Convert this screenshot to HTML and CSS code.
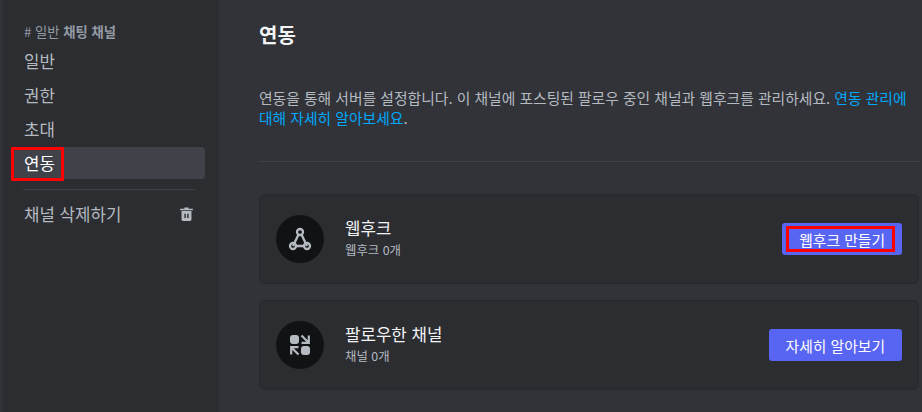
FILE: index.html
```html
<!DOCTYPE html>
<html lang="ko">
<head>
    <meta charset="UTF-8">
    <meta name="viewport" content="width=device-width, initial-scale=1.0">
    <title>연동</title>
    <link rel="stylesheet" href="styles.css">
</head>
<body>
    <div class="layout">
        <nav class="sidebar">
            <div class="side-header"><span class="hash"># 일반</span> <strong>채팅 채널</strong></div>
            <div class="side-item">일반</div>
            <div class="side-item">권한</div>
            <div class="side-item">초대</div>
            <div class="side-item active">연동<span class="mark mark-nav"></span></div>
            <div class="side-sep"></div>
            <div class="side-item delete">
                <span>채널 삭제하기</span>
                <svg class="trash" viewBox="0 0 24 24" width="17" height="17"><path fill="currentColor" d="M15 4V2H9v2H3v2h18V4h-6Z"/><path fill="currentColor" fill-rule="evenodd" d="M5 7v12c0 1.1.9 2 2 2h10c1.1 0 2-.9 2-2V7H5Zm6 10H9v-6h2v6Zm4 0h-2v-6h2v6Z"/></svg>
            </div>
        </nav>

        <main class="content">
            <h1>연동</h1>
            <p class="desc">연동을 통해 서버를 설정합니다. 이 채널에 포스팅된 팔로우 중인 채널과 웹후크를 관리하세요. <a href="#">연동 관리에 대해 자세히 알아보세요</a>.</p>
            <div class="content-sep"></div>

            <section class="card">
                <div class="card-icon">
                    <svg viewBox="0 0 24 24" width="24" height="24" fill="none" stroke="currentColor" stroke-width="2.300"><circle cx="12" cy="5" r="3"/><circle cx="5" cy="19" r="3"/><circle cx="19" cy="19" r="3"/><path d="M10.500 7.500 5 19M13.500 7.500 19 19M8 19h8"/></svg>
                </div>
                <div class="card-text">
                    <div class="card-title">웹후크</div>
                    <div class="card-sub">웹후크 0개</div>
                </div>
                <button class="btn">웹후크 만들기<span class="mark mark-btn"></span></button>
            </section>

            <section class="card">
                <div class="card-icon">
                    <svg viewBox="0 0 24 24" width="24" height="24"><rect x="2" y="2" width="9" height="9" rx="3" fill="currentColor"/><rect x="13" y="13" width="9" height="9" rx="3" fill="currentColor"/><path d="M13.500 2.500 20 9M13.500 9.800h7.300V2.500M10.500 21.500 4 15M10.500 14.200H3.200v7.300" fill="none" stroke="currentColor" stroke-width="2.200"/></svg>
                </div>
                <div class="card-text">
                    <div class="card-title">팔로우한 채널</div>
                    <div class="card-sub">채널 0개</div>
                </div>
                <button class="btn">자세히 알아보기</button>
            </section>
        </main>
    </div>
</body>
</html>
```

FILE: styles.css
```css
html, body {
    margin: 0;
    height: 100%;
    overflow: hidden;
}
body {
    background: #313338;
    color: #b5bac1;
    font-family: "Noto Sans CJK KR", "Noto Sans", sans-serif;
}
.layout {
    display: flex;
    height: 412px;
    padding-left: 3px;
    box-sizing: border-box;
}
.sidebar {
    width: 216px;
    flex-shrink: 0;
    box-sizing: border-box;
    background: #2b2d31;
    padding: 23px 14px 0 10px;
}
.side-header {
    height: 17px;
    line-height: 17px;
    padding-left: 11px;
    margin-bottom: 5px;
    font-size: 13.300px;
    color: #949ba4;
}
.side-header strong {
    font-weight: 700;
}
.side-item {
    position: relative;
    height: 32px;
    line-height: 32px;
    margin-bottom: 2px;
    padding-left: 11px;
    font-size: 16.800px;
    border-radius: 4px;
}
.side-item.active {
    background: #404249;
    color: #fff;
}
.side-sep {
    height: 1px;
    margin: 10px 10px 8px 10px;
    background: #3f4147;
}
.delete {
    display: flex;
    justify-content: space-between;
    align-items: center;
    padding-right: 10px;
}
.trash {
    color: #b5bac1;
}
.mark {
    position: absolute;
    box-sizing: border-box;
    border: 3px solid #f00;
    pointer-events: none;
}
.mark-nav {
    left: -2px;
    top: 0;
    width: 53px;
    height: 34px;
}
.mark-btn {
    left: 4px;
    top: 3px;
    width: 109px;
    height: 26px;
}
.content {
    flex: 1;
    min-width: 0;
    padding: 23px 3px 0 40px;
}
h1 {
    margin: 0 0 41px 0;
    font-size: 20px;
    line-height: 24px;
    font-weight: 700;
    color: #f2f3f5;
}
.desc {
    margin: 0;
    font-size: 14.800px;
    line-height: 20px;
    color: #b5bac1;
}
.desc a {
    color: #00a8fc;
    text-decoration: none;
}
.content-sep {
    height: 1px;
    margin: 33px 0 32px 0;
    background: #3f4147;
}
.card {
    display: flex;
    align-items: center;
    height: 90px;
    box-sizing: border-box;
    margin-bottom: 16px;
    padding: 0 16px;
    background: #2b2d31;
    border: 1px solid #26282c;
    border-radius: 6px;
}
.card-icon {
    display: flex;
    align-items: center;
    justify-content: center;
    width: 48px;
    height: 48px;
    flex-shrink: 0;
    border-radius: 50%;
    background: #111214;
    color: #b5bac1;
}
.card-text {
    flex: 1;
    margin-left: 21px;
    padding-bottom: 3px;
}
.card-title {
    font-size: 16.800px;
    line-height: 22px;
    color: #f2f3f5;
}
.card-sub {
    font-size: 12.400px;
    line-height: 16px;
    margin-top: 3px;
    color: #b5bac1;
}
.btn {
    position: relative;
    height: 32px;
    padding: 0 17px;
    border: none;
    border-radius: 3px;
    background: #5865f2;
    color: #fff;
    font-family: inherit;
    font-size: 14.800px;
    white-space: nowrap;
}
```
